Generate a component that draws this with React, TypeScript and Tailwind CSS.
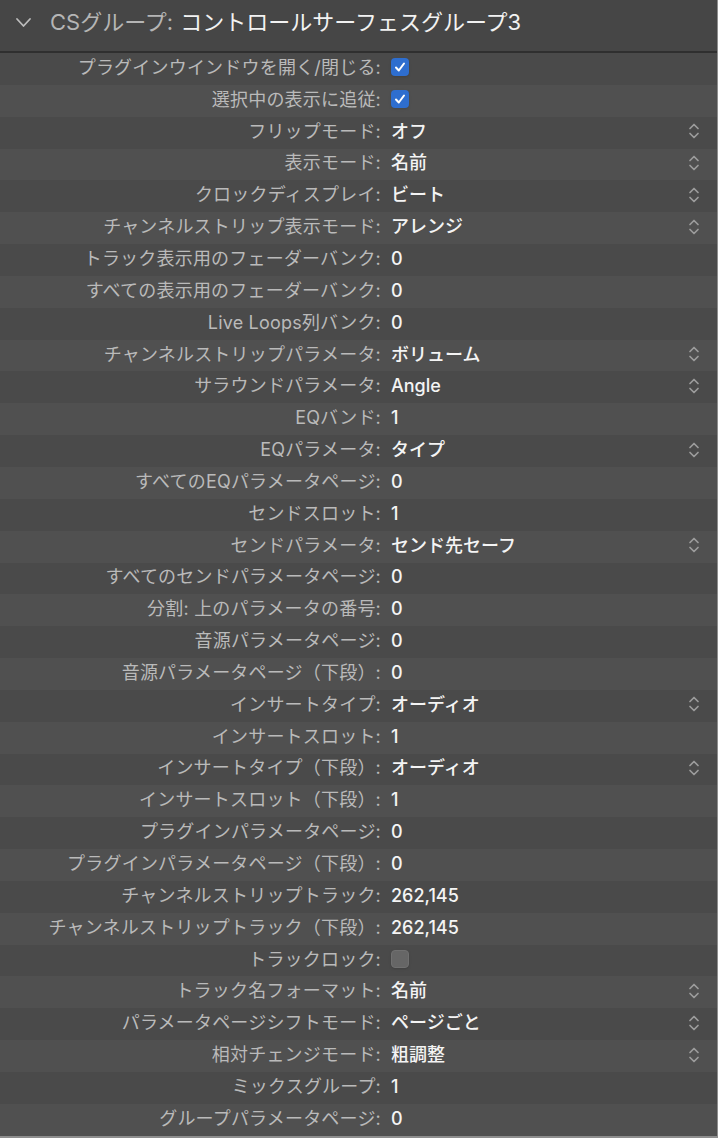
import React from "react";

type Row = {
  label: string;
  value?: string;
  check?: boolean;
  stepper?: boolean;
};

const rows: Row[] = [
  { label: "プラグインウインドウを開く/閉じる:", check: true },
  { label: "選択中の表示に追従:", check: true },
  { label: "フリップモード:", value: "オフ", stepper: true },
  { label: "表示モード:", value: "名前", stepper: true },
  { label: "クロックディスプレイ:", value: "ビート", stepper: true },
  { label: "チャンネルストリップ表示モード:", value: "アレンジ", stepper: true },
  { label: "トラック表示用のフェーダーバンク:", value: "0" },
  { label: "すべての表示用のフェーダーバンク:", value: "0" },
  { label: "Live Loops列バンク:", value: "0" },
  { label: "チャンネルストリップパラメータ:", value: "ボリューム", stepper: true },
  { label: "サラウンドパラメータ:", value: "Angle", stepper: true },
  { label: "EQバンド:", value: "1" },
  { label: "EQパラメータ:", value: "タイプ", stepper: true },
  { label: "すべてのEQパラメータページ:", value: "0" },
  { label: "センドスロット:", value: "1" },
  { label: "センドパラメータ:", value: "センド先セーフ", stepper: true },
  { label: "すべてのセンドパラメータページ:", value: "0" },
  { label: "分割: 上のパラメータの番号:", value: "0" },
  { label: "音源パラメータページ:", value: "0" },
  { label: "音源パラメータページ（下段）:", value: "0" },
  { label: "インサートタイプ:", value: "オーディオ", stepper: true },
  { label: "インサートスロット:", value: "1" },
  { label: "インサートタイプ（下段）:", value: "オーディオ", stepper: true },
  { label: "インサートスロット（下段）:", value: "1" },
  { label: "プラグインパラメータページ:", value: "0" },
  { label: "プラグインパラメータページ（下段）:", value: "0" },
  { label: "チャンネルストリップトラック:", value: "262,145" },
  { label: "チャンネルストリップトラック（下段）:", value: "262,145" },
  { label: "トラックロック:", check: false },
  { label: "トラック名フォーマット:", value: "名前", stepper: true },
  { label: "パラメータページシフトモード:", value: "ページごと", stepper: true },
  { label: "相対チェンジモード:", value: "粗調整", stepper: true },
  { label: "ミックスグループ:", value: "1" },
  { label: "グループパラメータページ:", value: "0" },
];

function Stepper() {
  return (
    <svg width="12" height="20" viewBox="0 0 12 20" fill="none" stroke="#9c9c9c" strokeWidth="1.7" strokeLinecap="round" strokeLinejoin="round">
      <path d="M2 7.5 L6 3.5 L10 7.5" />
      <path d="M2 12.5 L6 16.5 L10 12.5" />
    </svg>
  );
}

function Checkbox({ on }: { on: boolean }) {
  if (!on) {
    return <div className="w-[18px] h-[18px] rounded-[4px] bg-[#666666] border border-[#707070] shadow-sm" />;
  }
  return (
    <div className="w-[18px] h-[18px] rounded-[4px] bg-[#2e6ecf] flex items-center justify-center shadow-sm">
      <svg width="12" height="12" viewBox="0 0 12 12" fill="none" stroke="#ffffff" strokeWidth="2" strokeLinecap="round" strokeLinejoin="round">
        <path d="M2 6.5 L4.8 9.5 L10 2.5" />
      </svg>
    </div>
  );
}

export default function App() {
  return (
    <div
      className="w-[718px] h-[1138px] bg-[#4b4b4b] border-r border-b-2 border-[#8e8e8e] overflow-hidden"
      style={{ fontFamily: 'Inter, "Noto Sans CJK JP", sans-serif' }}
    >
      {/* header */}
      <div className="h-[51px] bg-[#464646] flex items-center pb-[6px]">
        <svg className="ml-[15px]" width="17" height="11" viewBox="0 0 17 11" fill="none" stroke="#bdbdbd" strokeWidth="1.8" strokeLinecap="round" strokeLinejoin="round">
          <path d="M2 2 L8.5 9 L15 2" />
        </svg>
        <span className="ml-[18px] text-[22px] text-[#b5b5b5]">CSグループ:</span>
        <span className="ml-[7px] text-[22px] text-[#f2f2f2]">コントロールサーフェスグループ3</span>
      </div>
      <div className="h-[2px] bg-[#2f2f2f]" />

      {rows.map((r, i) => (
        <div
          key={r.label}
          className={`h-[31.85px] flex items-center pb-[3px] ${i % 2 === 0 ? "bg-[#4a4a4a]" : "bg-[#505050]"}`}
        >
          <div className="w-[381px] shrink-0 text-right text-[18px] tracking-[0.2px] text-[#bababa] whitespace-nowrap">
            {r.label}
          </div>
          <div className="ml-[10px] flex items-center">
            {r.check !== undefined ? (
              <Checkbox on={r.check} />
            ) : (
              <span className="text-[18px] font-medium text-[#f4f4f4] whitespace-nowrap">{r.value}</span>
            )}
          </div>
          {r.stepper && (
            <div className="ml-auto mr-[17px] flex items-center">
              <Stepper />
            </div>
          )}
        </div>
      ))}
    </div>
  );
}
